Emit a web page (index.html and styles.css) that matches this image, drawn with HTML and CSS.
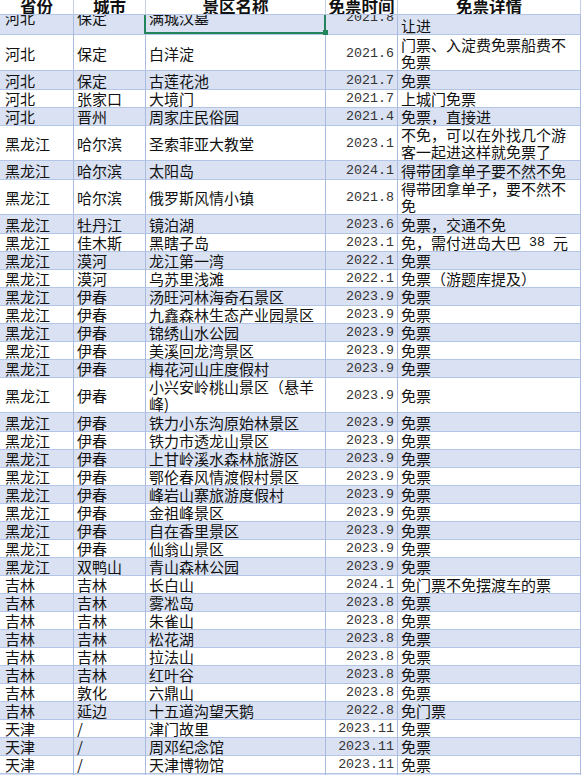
FILE: index.html
```html
<!DOCTYPE html>
<html lang="zh-CN">
<head>
<meta charset="utf-8">
<title>免票景区</title>
<link rel="stylesheet" href="styles.css">
</head>
<body>
<div class="sheet">
  <div class="row head">
    <div class="c">省份</div><div class="c">城市</div><div class="c">景区名称</div><div class="c">免票时间</div><div class="c">免票详情</div>
  </div>
  <div class="clip">
    <div class="row tall alt">
      <div class="c">河北</div><div class="c">保定</div><div class="c name sel">满城汉墓<span class="selbox"></span><span class="handle"></span></div><div class="c num">2021.8</div><div class="c det bottom">让进</div>
    </div>
  </div>
  <div class="body">
    <div class="row tall"><div class="c">河北</div><div class="c">保定</div><div class="c name">白洋淀</div><div class="c num">2021.6</div><div class="c det">门票、入淀费免票船费不免票</div></div>
    <div class="row"><div class="c">河北</div><div class="c">保定</div><div class="c name">古莲花池</div><div class="c num">2021.7</div><div class="c det">免票</div></div>
    <div class="row"><div class="c">河北</div><div class="c">张家口</div><div class="c name">大境门</div><div class="c num">2021.7</div><div class="c det">上城门免票</div></div>
    <div class="row"><div class="c">河北</div><div class="c">晋州</div><div class="c name">周家庄民俗园</div><div class="c num">2021.4</div><div class="c det">免票，直接进</div></div>
    <div class="row tall"><div class="c">黑龙江</div><div class="c">哈尔滨</div><div class="c name">圣索菲亚大教堂</div><div class="c num">2023.1</div><div class="c det">不免，可以在外找几个游客一起进这样就免票了</div></div>
    <div class="row"><div class="c">黑龙江</div><div class="c">哈尔滨</div><div class="c name">太阳岛</div><div class="c num">2024.1</div><div class="c det">得带团拿单子要不然不免</div></div>
    <div class="row tall"><div class="c">黑龙江</div><div class="c">哈尔滨</div><div class="c name">俄罗斯风情小镇</div><div class="c num">2021.8</div><div class="c det">得带团拿单子，要不然不免</div></div>
    <div class="row"><div class="c">黑龙江</div><div class="c">牡丹江</div><div class="c name">镜泊湖</div><div class="c num">2023.6</div><div class="c det">免票，交通不免</div></div>
    <div class="row"><div class="c">黑龙江</div><div class="c">佳木斯</div><div class="c name">黑瞎子岛</div><div class="c num">2023.1</div><div class="c det nw">免，需付进岛大巴<span class="mono"> 38 </span>元</div></div>
    <div class="row"><div class="c">黑龙江</div><div class="c">漠河</div><div class="c name">龙江第一湾</div><div class="c num">2022.1</div><div class="c det">免票</div></div>
    <div class="row"><div class="c">黑龙江</div><div class="c">漠河</div><div class="c name">乌苏里浅滩</div><div class="c num">2022.1</div><div class="c det">免票（游题库提及）</div></div>
    <div class="row"><div class="c">黑龙江</div><div class="c">伊春</div><div class="c name">汤旺河林海奇石景区</div><div class="c num">2023.9</div><div class="c det">免票</div></div>
    <div class="row"><div class="c">黑龙江</div><div class="c">伊春</div><div class="c name">九鑫森林生态产业园景区</div><div class="c num">2023.9</div><div class="c det">免票</div></div>
    <div class="row"><div class="c">黑龙江</div><div class="c">伊春</div><div class="c name">锦绣山水公园</div><div class="c num">2023.9</div><div class="c det">免票</div></div>
    <div class="row"><div class="c">黑龙江</div><div class="c">伊春</div><div class="c name">美溪回龙湾景区</div><div class="c num">2023.9</div><div class="c det">免票</div></div>
    <div class="row"><div class="c">黑龙江</div><div class="c">伊春</div><div class="c name">梅花河山庄度假村</div><div class="c num">2023.9</div><div class="c det">免票</div></div>
    <div class="row tall"><div class="c">黑龙江</div><div class="c">伊春</div><div class="c name wrapname">小兴安岭桃山景区（悬羊峰)</div><div class="c num">2023.9</div><div class="c det">免票</div></div>
    <div class="row"><div class="c">黑龙江</div><div class="c">伊春</div><div class="c name">铁力小东沟原始林景区</div><div class="c num">2023.9</div><div class="c det">免票</div></div>
    <div class="row"><div class="c">黑龙江</div><div class="c">伊春</div><div class="c name">铁力市透龙山景区</div><div class="c num">2023.9</div><div class="c det">免票</div></div>
    <div class="row"><div class="c">黑龙江</div><div class="c">伊春</div><div class="c name">上甘岭溪水森林旅游区</div><div class="c num">2023.9</div><div class="c det">免票</div></div>
    <div class="row"><div class="c">黑龙江</div><div class="c">伊春</div><div class="c name">鄂伦春风情渡假村景区</div><div class="c num">2023.9</div><div class="c det">免票</div></div>
    <div class="row"><div class="c">黑龙江</div><div class="c">伊春</div><div class="c name">峰岩山寨旅游度假村</div><div class="c num">2023.9</div><div class="c det">免票</div></div>
    <div class="row"><div class="c">黑龙江</div><div class="c">伊春</div><div class="c name">金祖峰景区</div><div class="c num">2023.9</div><div class="c det">免票</div></div>
    <div class="row"><div class="c">黑龙江</div><div class="c">伊春</div><div class="c name">自在香里景区</div><div class="c num">2023.9</div><div class="c det">免票</div></div>
    <div class="row"><div class="c">黑龙江</div><div class="c">伊春</div><div class="c name">仙翁山景区</div><div class="c num">2023.9</div><div class="c det">免票</div></div>
    <div class="row"><div class="c">黑龙江</div><div class="c">双鸭山</div><div class="c name">青山森林公园</div><div class="c num">2023.9</div><div class="c det">免票</div></div>
    <div class="row"><div class="c">吉林</div><div class="c">吉林</div><div class="c name">长白山</div><div class="c num">2024.1</div><div class="c det">免门票不免摆渡车的票</div></div>
    <div class="row"><div class="c">吉林</div><div class="c">吉林</div><div class="c name">雾凇岛</div><div class="c num">2023.8</div><div class="c det">免票</div></div>
    <div class="row"><div class="c">吉林</div><div class="c">吉林</div><div class="c name">朱雀山</div><div class="c num">2023.8</div><div class="c det">免票</div></div>
    <div class="row"><div class="c">吉林</div><div class="c">吉林</div><div class="c name">松花湖</div><div class="c num">2023.8</div><div class="c det">免票</div></div>
    <div class="row"><div class="c">吉林</div><div class="c">吉林</div><div class="c name">拉法山</div><div class="c num">2023.8</div><div class="c det">免票</div></div>
    <div class="row"><div class="c">吉林</div><div class="c">吉林</div><div class="c name">红叶谷</div><div class="c num">2023.8</div><div class="c det">免票</div></div>
    <div class="row"><div class="c">吉林</div><div class="c">敦化</div><div class="c name">六鼎山</div><div class="c num">2023.8</div><div class="c det">免票</div></div>
    <div class="row"><div class="c">吉林</div><div class="c">延边</div><div class="c name">十五道沟望天鹅</div><div class="c num">2022.8</div><div class="c det">免门票</div></div>
    <div class="row"><div class="c">天津</div><div class="c">/</div><div class="c name">津门故里</div><div class="c num">2023.11</div><div class="c det">免票</div></div>
    <div class="row"><div class="c">天津</div><div class="c">/</div><div class="c name">周邓纪念馆</div><div class="c num">2023.11</div><div class="c det">免票</div></div>
    <div class="row"><div class="c">天津</div><div class="c">/</div><div class="c name">天津博物馆</div><div class="c num">2023.11</div><div class="c det">免票</div></div>
    <div class="row"><div class="c"></div><div class="c"></div><div class="c name"></div><div class="c num"></div><div class="c det"></div></div>
  </div>
</div>
</body>
</html>
```
FILE: styles.css
```css
html, body {
  margin: 0;
  padding: 0;
}
body {
  width: 581px;
  height: 775px;
  overflow: hidden;
  background: #ffffff;
  font-family: "Noto Sans CJK SC", "Noto Sans", sans-serif;
  font-size: 15px;
  color: #111;
}
.sheet {
  display: flex;
  flex-direction: column;
}
.row {
  display: grid;
  grid-template-columns: 74px 72px 180px 72px 1fr;
  height: 18px;
  flex: none;
}
.row.tall {
  height: 36px;
}
.body .row:nth-child(even),
.row.alt {
  background: #d9e1f2;
}
.c {
  box-sizing: border-box;
  border-right: 1px solid #a9bbdf;
  border-bottom: 1px solid #b4c6e7;
  display: flex;
  align-items: center;
  padding-left: 3px;
  padding-top: 1px;
  white-space: nowrap;
  line-height: 17px;
  overflow: hidden;
}
.c:first-child {
  padding-left: 5px;
}
.c.name {
  overflow: visible;
  position: relative;
  z-index: 1;
}
.c.wrapname {
  white-space: normal;
  padding-right: 4px;
}
.c.num {
  justify-content: flex-end;
  padding-right: 3px;
  font-family: "Liberation Mono", monospace;
  font-size: 13.3px;
  color: #333;
}
.c.det {
  white-space: normal;
  padding-right: 10px;
  align-items: center;
}
.c.det.bottom {
  align-items: flex-end;
  padding-bottom: 0;
}
.c.det.nw {
  white-space: nowrap;
  overflow: visible;
}
.mono {
  font-family: "Liberation Mono", monospace;
  font-size: 13.3px;
  white-space: pre;
}
.head {
  height: 15px;
  background: #ffffff;
  font-weight: bold;
  font-size: 16.5px;
  position: relative;
  z-index: 2;
}
.head .c {
  justify-content: center;
  padding: 0;
  line-height: 16px;
  align-items: flex-end;
  border-right-color: #c3cfe6;
}
.clip {
  height: 20px;
  overflow: hidden;
  display: flex;
  flex-direction: column;
  justify-content: flex-end;
  flex: none;
}
.selbox {
  position: absolute;
  left: -2px;
  right: -1px;
  top: -2px;
  bottom: 0;
  border: 2px solid #21845a;
  pointer-events: none;
}
.handle {
  position: absolute;
  right: -3px;
  bottom: -1px;
  width: 5px;
  height: 5px;
  background: #21845a;
}
```
